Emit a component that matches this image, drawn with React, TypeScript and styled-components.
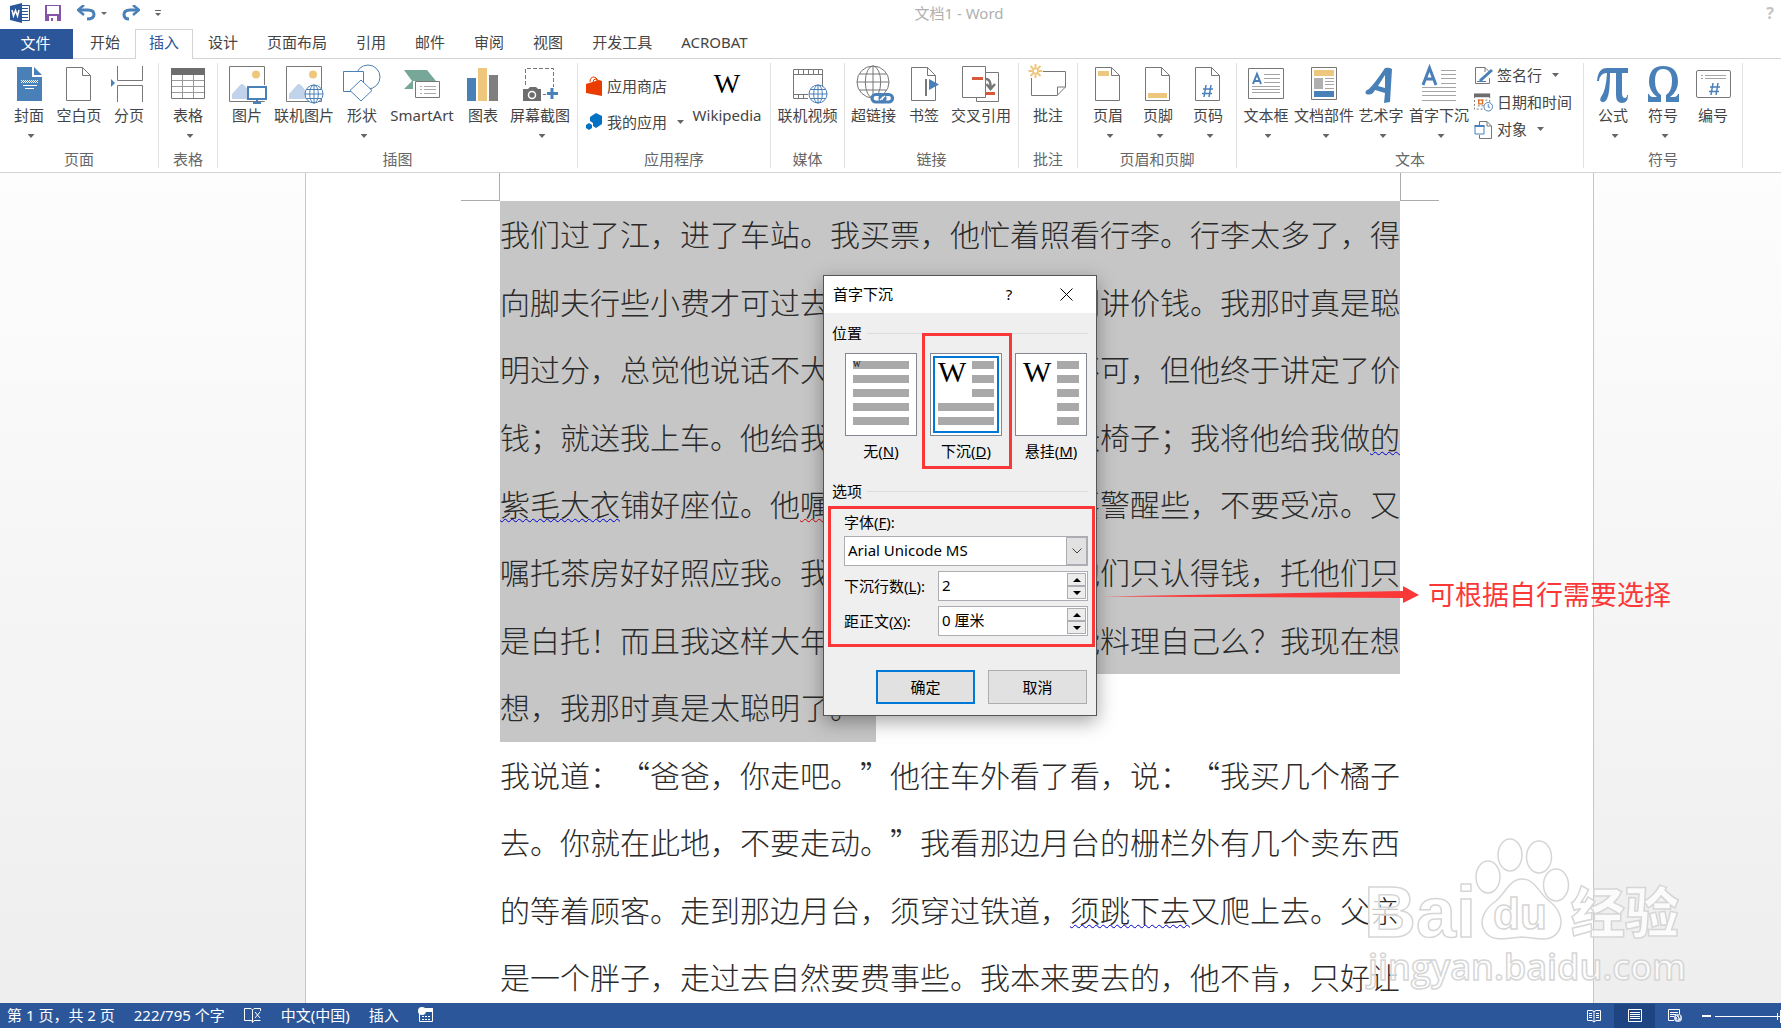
import React from "react";
import styled, { createGlobalStyle, css } from "styled-components";

const UI = '"Noto Sans", "Noto Sans CJK SC", sans-serif';
const BLUE = "#4a80b8";
const GRAY = "#777777";
const GOLD = "#eec77d";
const RED = "#fb3838";

const Global = createGlobalStyle`
  * { box-sizing: border-box; }
  body { margin: 0; background: #fff; font-family: ${UI}; font-size: 15px; line-height: 20px; color: #444; }
  button, input, select { font: inherit; color: inherit; margin: 0; padding: 0; border: 0; background: none; border-radius: 0; }
  svg { display: block; flex: none; }
`;

const Shell = styled.div`
  position: relative;
  display: flex;
  flex-direction: column;
  height: 100vh;
  overflow: hidden;
`;

/* ---------- title bar ---------- */
const TitleBar = styled.header`
  display: flex;
  height: 29px;
  flex: none;
`;
const QuickAccess = styled.div`
  display: flex;
  align-items: center;
  width: 165px;
  padding: 0 0 3px 9px;
`;
const QuickButton = styled.button<{ $w: number }>`
  display: flex;
  width: ${(p) => p.$w}px;
`;
const Title = styled.h1`
  flex: 1;
  margin: 0;
  text-align: center;
  font-size: 15px;
  font-weight: 400;
  line-height: 26px;
  color: #b0b0b0;
`;
const Help = styled.button`
  width: 28px;
  padding: 0 0 4px 6px;
  font-weight: 700;
  font-size: 16px;
  color: #c4c4c4;
`;

/* ---------- tabs ---------- */
const TabStrip = styled.nav`
  display: flex;
  gap: 1px;
  height: 30px;
  flex: none;
  box-shadow: inset 0 -1px #d4d4d4;
`;
const FileTab = styled.button`
  width: 73px;
  margin-right: 2px;
  padding: 0 10px 2px 8px;
  background: #2b579a;
  color: #fff;
`;
const Tab = styled.button<{ $active?: boolean }>`
  padding: 0 13px 5px;
  border: 1px solid transparent;
  border-bottom: 0;
  white-space: nowrap;
  ${(p) => p.$active && css`
    border-color: #d4d4d4;
    background: #fff;
    color: #2b579a;
  `}
`;

/* ---------- ribbon ---------- */
const Ribbon = styled.div`
  display: flex;
  flex: none;
  height: 114px;
  padding: 4px 0;
  border-bottom: 1px solid #d4d4d4;
`;
const Group = styled.section<{ $w: number }>`
  display: flex;
  flex-direction: column;
  flex: none;
  justify-content: space-between;
  width: ${(p) => p.$w}px;
  border-right: 1px solid #e1e1e1;
`;
const GroupBody = styled.div<{ $pad?: number }>`
  display: flex;
  height: 78px;
  padding-left: ${(p) => p.$pad ?? 0}px;
`;
const GroupName = styled.h2`
  margin: 0;
  font-size: 15px;
  font-weight: 400;
  line-height: 17px;
  text-align: center;
  color: #666;
`;
const Big = styled.button<{ $w: number }>`
  display: flex;
  flex-direction: column;
  align-items: center;
  flex: none;
  width: ${(p) => p.$w}px;
  white-space: nowrap;
`;
const BigLabel = styled.span`
  display: flex;
  justify-content: center;
  width: 0;
  line-height: 21px;
`;
const Caret = styled.i`
  width: 7px;
  height: 4px;
  background: #666;
  clip-path: polygon(0 0, 100% 0, 50% 100%);
`;
const BigCaret = styled(Caret)`
  margin: 8px 0 0 4px;
`;
const List = styled.div<{ $gap: number; $pad: string }>`
  display: flex;
  flex-direction: column;
  flex: 1;
  gap: ${(p) => p.$gap}px;
  padding: ${(p) => p.$pad};
`;
const Small = styled.button`
  display: flex;
  align-items: center;
  gap: 4px;
  height: 20px;
  white-space: nowrap;
`;
const SmallCaret = styled(Caret)`
  margin-left: 6px;
`;

/* ---------- document ---------- */
const Workspace = styled.main`
  flex: 1;
  min-height: 0;
  display: flex;
  overflow: hidden;
  padding-left: 305px;
  background: linear-gradient(#fdfdfd, #eeeeee);
`;
const Page = styled.article`
  flex: 0 0 1289px;
  background: #fff;
  border: solid #c6c6c6;
  border-width: 0 1px;
`;
const Margins = styled.div`
  display: flex;
  justify-content: space-between;
  height: 28px;
  padding: 0 154px 0 155px;
`;
const Crop = styled.i<{ $side: "left" | "right" }>`
  width: 39px;
  border-bottom: 1px solid #ababab;
  ${(p) => (p.$side === "left" ? "border-right" : "border-left")}: 1px solid #ababab;
`;
const Lines = styled.div`
  display: grid;
  grid-template-rows: repeat(12, 1fr);
  height: 811px;
  width: 900px;
  margin-left: 194px;
  font-family: "Noto Sans CJK SC", sans-serif;
  font-weight: 300;
  font-size: 30px;
  color: #2a2a2a;
  text-spacing-trim: space-all;
`;
const Line = styled.p<{ $selected?: boolean; $short?: boolean }>`
  margin: 0;
  line-height: 64px;
  white-space: nowrap;
  text-align-last: ${(p) => (p.$short ? "left" : "justify")};
  width: ${(p) => (p.$short ? "376px" : "auto")};
  background: ${(p) => (p.$selected ? "#c6c6c6" : "none")};
`;
const Wavy = styled.span<{ $c: string }>`
  text-decoration: underline wavy ${(p) => p.$c} 1px;
  text-underline-offset: 2px;
  text-decoration-skip-ink: none;
`;

/* ---------- dialog ---------- */
const Dialog = styled.form`
  position: absolute;
  left: 823px;
  top: 275px;
  width: 274px;
  border: 1px solid #555;
  background: #efefef;
  color: #000;
  box-shadow: 0 6px 18px rgba(0, 0, 0, 0.35);
`;
const DialogTitle = styled.header`
  display: flex;
  align-items: center;
  height: 37px;
  padding: 0 23px 1px 9px;
  background: #fff;
`;
const DialogName = styled.span`
  flex: 1;
`;
const DialogButton = styled.button`
  display: flex;
  justify-content: center;
  width: 14px;
  margin-left: 43px;
`;
const DialogBody = styled.div`
  padding: 10px 8px 11px;
`;
const Section = styled.h3`
  display: flex;
  align-items: center;
  gap: 5px;
  margin: 0;
  font-size: 15px;
  font-weight: 400;
  &::after { content: ""; flex: 1; height: 1px; background: #dcdcdc; }
`;
const Choices = styled.div`
  display: flex;
  gap: 13px;
  margin: 10px 1px 20px 13px;
`;
const Choice = styled.label`
  display: flex;
  flex-direction: column;
  align-items: center;
  gap: 5px;
  width: 72px;
  white-space: nowrap;
`;
const HiddenRadio = styled.input`
  position: absolute;
  opacity: 0;
`;
const Fields = styled.div`
  display: flex;
  flex-direction: column;
  gap: 5px;
  margin: 11px 0 34px 12px;
`;
const SelectWrap = styled.div`
  position: relative;
  display: flex;
  height: 30px;
  margin-top: -1px;
  border: 1px solid #abadb3;
  background: #fff;
`;
const FontSelect = styled.select`
  flex: 1;
  appearance: none;
  padding: 0 0 3px 3px;
`;
const SelectArrow = styled.span`
  position: absolute;
  right: 0;
  top: 0;
  display: flex;
  align-items: center;
  justify-content: center;
  width: 21px;
  height: 28px;
  border: 1px solid #abadb3;
  background: #e1e1e1;
  pointer-events: none;
`;
const FieldRow = styled.div`
  display: flex;
  align-items: center;
  justify-content: space-between;
`;
const Spin = styled.div`
  display: flex;
  width: 150px;
  height: 30px;
  padding: 1px;
  border: 1px solid #abadb3;
  background: #fff;
`;
const SpinInput = styled.input`
  flex: 1;
  min-width: 0;
  padding: 0 0 3px 2px;
`;
const SpinButtons = styled.div`
  display: grid;
  grid-template-rows: 1fr 1fr;
  width: 19px;
`;
const SpinButton = styled.button`
  display: flex;
  align-items: center;
  justify-content: center;
  border: 1px solid #abadb3;
  background: #ececec;
`;
const Actions = styled.div`
  display: flex;
  justify-content: flex-end;
  gap: 13px;
  padding-right: 1px;
`;
const Action = styled.button<{ $primary?: boolean }>`
  width: 99px;
  height: 34px;
  border: ${(p) => (p.$primary ? "2px solid #0078d7" : "1px solid #adadad")};
  background: #e1e1e1;
`;
const RedFrame = styled.div<{ $x: number; $y: number; $w: number; $h: number }>`
  position: absolute;
  left: ${(p) => p.$x}px;
  top: ${(p) => p.$y}px;
  width: ${(p) => p.$w}px;
  height: ${(p) => p.$h}px;
  border: 3px solid ${RED};
  pointer-events: none;
`;

/* ---------- overlays ---------- */
const Note = styled.div`
  position: absolute;
  left: 1102px;
  top: 577px;
  display: flex;
  align-items: center;
  gap: 9px;
  font-size: 27px;
  line-height: 36px;
  color: ${RED};
  white-space: nowrap;
`;
const Watermark = styled.svg`
  position: absolute;
  left: 1340px;
  top: 820px;
  pointer-events: none;
`;

/* ---------- status bar ---------- */
const Status = styled.footer`
  display: flex;
  align-items: center;
  flex: none;
  height: 25px;
  padding-left: 7px;
  background: #2b579a;
  color: #fff;
  white-space: nowrap;
`;
const StatusItems = styled.div`
  display: flex;
  align-items: center;
  gap: 19px;
  flex: 1;
  padding-bottom: 2px;
`;
const View = styled.button<{ $on?: boolean }>`
  display: flex;
  align-items: center;
  justify-content: center;
  width: 41px;
  height: 24px;
  background: ${(p) => (p.$on ? "#1e4482" : "none")};
`;
const Zoom = styled.div`
  display: flex;
  width: 85px;
`;

/* ---------- icons ---------- */
const Icon = ({ children }: { children: React.ReactNode }) => (
  <svg width="40" height="42" viewBox="0 0 40 42" fill="none" stroke={GRAY} strokeWidth="1">{children}</svg>
);
const Globe = ({ x, y, r, c = BLUE, w = 1 }: { x: number; y: number; r: number; c?: string; w?: number }) => (
  <g stroke={c} strokeWidth={w} fill="#fff">
    <circle cx={x} cy={y} r={r} />
    <ellipse cx={x} cy={y} rx={r * 0.48} ry={r} fill="none" />
    <path d={`M${x} ${y - r}V${y + r}M${x - r} ${y}H${x + r}M${x - r * 0.85} ${y - r * 0.5}H${x + r * 0.85}M${x - r * 0.85} ${y + r * 0.5}H${x + r * 0.85}`} fill="none" />
  </g>
);
const Sheet = ({ children }: { children?: React.ReactNode }) => (
  <Icon><path d="M7.500 4.500H23.500L31.500 12.500V37.500H7.500ZM23.500 4.500V12.500H31.500" />{children}</Icon>
);
const Photo = ({ children }: { children: React.ReactNode }) => (
  <Icon>
    <path d="M2.500 3.500H37.500V38.500H2.500Z" stroke={GRAY} />
    <circle cx="29" cy="11.500" r="4" fill={GOLD} stroke="none" />
    <path d="M5 36V31L13 22Q15 20 17 22L27 34V36Z" fill="#c1d3ea" stroke="none" />
    {children}
  </Icon>
);

const icons: Record<string, React.ReactNode> = {
  cover: (
    <Icon>
      <path d="M8 4H23V14H33V38H8Z" fill={BLUE} stroke="none" />
      <path d="M25 4L33 12H25Z" fill={BLUE} stroke="none" />
      <path d="M12 17.500H29M12 19.500H29" stroke="#fff" strokeDasharray="1 1" />
      <path d="M13 18.500H29" stroke="#fff" strokeDasharray="1 1" />
      <path d="M14 22.500H28M16 25.500H25" stroke="#fff" />
    </Icon>
  ),
  blank: <Sheet />,
  pageBreak: (
    <Icon>
      <path d="M8.500 3V17.500H33.500V3M8.500 39V22.500H33.500V39" />
      <path d="M2 16V24L6 20Z" fill={BLUE} stroke="none" />
    </Icon>
  ),
  table: (
    <Icon>
      <path d="M3.500 5.500H36.500V35.500H3.500Z" />
      <path d="M3 5H37V12H3Z" fill="#6d6d6d" stroke="none" />
      <path d="M4 17.500H36M4 23.500H36M4 29.500H36M14.500 12V35M25.500 12V35" stroke="#9a9a9a" />
    </Icon>
  ),
  picture: (
    <Photo>
      <path d="M20 22H40V38H20Z" fill="#fff" stroke="none" />
      <path d="M21 24H39V36H21Z" fill="#fff" stroke={BLUE} strokeWidth="2" />
      <path d="M30 36V40M26 40H34" stroke={BLUE} strokeWidth="2" />
    </Photo>
  ),
  online: <Photo><Globe x={30} y={31} r={9} /></Photo>,
  shapes: (
    <Icon>
      <g stroke={BLUE}>
        <circle cx="26" cy="14" r="12" />
        <path d="M1.500 8.500H21.500V28.500H1.500Z" fill="#fff" />
        <path d="M19 17L30 27.500L19 38L8 27.500Z" fill="#fff" />
      </g>
    </Icon>
  ),
  smart: (
    <Icon>
      <path d="M2 7H25L34 18V26H2L10 18Z" fill="#77a798" stroke="none" />
      <path d="M11 18H40V36H11Z" fill="#fff" stroke="none" />
      <path d="M13.500 18.500H37.500V34.500H13.500Z" fill="#fff" />
      <path d="M18 23.500H20M22 23.500H34M18 26.500H20M22 26.500H34M18 30.500H20M22 30.500H34" stroke="#aaa" />
    </Icon>
  ),
  chart: (
    <Icon>
      <g stroke="none">
        <path d="M4 15H13V38H4Z" fill={BLUE} />
        <path d="M15 5H24V38H15Z" fill={GOLD} />
        <path d="M26 12H35V38H26Z" fill="#7f7f7f" />
      </g>
    </Icon>
  ),
  screenshot: (
    <Icon>
      <path d="M5.500 22V5.500H33.500V24M23 31.500H26" strokeDasharray="4 2" />
      <path d="M3 26H8L10 24H16L18 26H21V38H3Z" fill="#6d6d6d" stroke="none" />
      <circle cx="12" cy="32" r="3.500" fill="#6d6d6d" stroke="#fff" strokeWidth="1.500" />
      <path d="M32 25V36M27 30.500H38" stroke={BLUE} strokeWidth="3" />
    </Icon>
  ),
  wikipedia: (
    <svg width="40" height="42" viewBox="0 0 40 42">
      <text x="20" y="30" textAnchor="middle" fontFamily="Liberation Serif, serif" fontSize="28" fill="#000">W</text>
    </svg>
  ),
  video: (
    <Icon>
      <path d="M5.500 6.500H34.500V36M5.500 6.500V35.500H20M5.500 11.500H34M5.500 31.500H20M10.500 7V11M15.500 7V11M20.500 7V11M25.500 7V11M30.500 7V11M10.500 32V35M15.500 32V35" />
      <Globe x={30} y={31} r={9} />
    </Icon>
  ),
  link: (
    <Icon>
      <Globe x={19} y={19} r={16} c={GRAY} />
      <g strokeWidth="8" stroke="#fff" strokeLinecap="round"><path d="M22 36H34" /></g>
      <g stroke={BLUE} strokeWidth="3.200">
        <rect x="18" y="31.500" width="13" height="7.500" rx="3.700" />
        <rect x="26" y="31.500" width="12.500" height="7.500" rx="3.700" />
      </g>
      <path d="M26 37L31 33" stroke="#fff" strokeWidth="1.500" />
    </Icon>
  ),
  bookmark: (
    <Sheet>
      <path d="M22 16V33" strokeWidth="2" />
      <path d="M25 16L35 21.500L25 27Z" fill={BLUE} stroke="none" />
    </Sheet>
  ),
  crossRef: (
    <Icon>
      <path d="M15.500 38.500V9.500H37.500V38.500Z" fill="#fff" />
      <path d="M1.500 3.500H24.500V34.500H1.500Z" fill="#fff" />
      <path d="M11 15.500H22M25 30.500H34" stroke="#d6593a" strokeWidth="3" />
      <path d="M25 16Q30 16 29.500 25M25.500 21L29.500 26L34 21" strokeWidth="2.500" />
    </Icon>
  ),
  comment: (
    <Icon>
      <path d="M15 8.500H37.500V24L29 32.500H3.500V15M37.500 24H29.500V32.500" />
      <path d="M7.500 1V15M0.500 8H14.500M2.500 3L12.500 13M12.500 3L2.500 13" stroke={GOLD} strokeWidth="2" />
      <circle cx="7.500" cy="8" r="2.500" fill="#fff" stroke={GOLD} strokeWidth="1.500" />
    </Icon>
  ),
  header: <Sheet><path d="M10 8H21V13H10Z" fill={GOLD} stroke="none" /></Sheet>,
  footer: <Sheet><path d="M10 30H29V35H10Z" fill={GOLD} stroke="none" /></Sheet>,
  pageNo: <Sheet><path d="M18 22L16 34M23 22L21 34M15 26H25M14 30.500H24" stroke={BLUE} strokeWidth="1.500" /></Sheet>,
  textBox: (
    <Icon>
      <path d="M2.500 5.500H37.500V35.500H2.500Z" />
      <path d="M7 21L11 11L15 21M8.500 18H13.500" stroke={BLUE} strokeWidth="2" />
      <path d="M18 11.500H34M18 15.500H34M18 19.500H34M6 23.500H34M6 26.500H34M6 29.500H34" stroke="#a5a5a5" />
    </Icon>
  ),
  parts: (
    <Icon>
      <path d="M7.500 4.500H32.500V36.500H7.500Z" strokeWidth="1" />
      <path d="M10 7H30V13H10Z" fill={GOLD} stroke="none" />
      <path d="M10 15H19V26H10Z" fill="#b0b0b0" stroke="none" />
      <path d="M10 28H30V34H10Z" fill={BLUE} stroke="none" />
      <path d="M21 15.500H30M21 18.500H30M21 21.500H30M21 25.500H30" stroke="#a5a5a5" />
    </Icon>
  ),
  wordArt: (
    <Icon>
      <path d="M24 5Q28 4 31 6L29 39L23 40L24 30L14 27Q11 33 5 31Q3 28 8 26Q14 20 24 5ZM24 12L17 23L24 25Z" fill={BLUE} fillRule="evenodd" stroke="none" />
    </Icon>
  ),
  dropCap: (
    <Icon>
      <path d="M4 22L10.500 5L17 22M6.500 16H14.500" stroke={BLUE} strokeWidth="3" />
      <path d="M22 7.500H37M22 11.500H37M22 15.500H37M22 20.500H37M3 24.500H37M3 28.500H37M3 32.500H37M3 37.500H37" stroke="#a5a5a5" />
    </Icon>
  ),
  pi: (
    <Icon>
      <path d="M4 18Q5 5 14 5H35V10H29V30Q29 35 32 35Q34 35 34 32H35Q35 40 29 40Q23 40 23 32V10H17Q17 30 14 36Q12 40 9 39Q6 38 8 34Q13 28 14 10Q7 10 6 18Z" fill={BLUE} stroke="none" />
    </Icon>
  ),
  omega: (
    <Icon>
      <path d="M5 31H6Q7 34 10 34H14Q6 28 6 19Q6 3 20 3Q35 3 35 19Q35 28 27 34H31Q34 34 35 31H36V39H23V32Q29 28 29 18Q29 6 20 6Q12 6 12 18Q12 28 18 32V39H5Z" fill={BLUE} stroke="none" />
    </Icon>
  ),
  numbering: (
    <Icon>
      <rect x="3.500" y="7.500" width="34" height="27" rx="1.500" />
      <path d="M8 12.500H10M12 12.500H33M8 15.500H10M12 15.500H33" stroke="#a5a5a5" />
      <path d="M20 20L18 32M25 20L23 32M17 24H27M16 28.500H26" stroke={BLUE} strokeWidth="1.500" />
    </Icon>
  ),
};

type Item = [icon: string, label: string, width: number, caret?: boolean];

const RibbonGroup = ({ name, w, pad, items, lead, children }: { name: string; w: number; pad?: number; items: Item[]; lead?: React.ReactNode; children?: React.ReactNode }) => (
  <Group $w={w}>
    <GroupBody $pad={pad}>
      {lead}
      {items.map(([icon, label, width, caret]) => (
        <Big key={label} $w={width} type="button">
          {icons[icon]}
          <BigLabel>{label}</BigLabel>
          {caret && <BigCaret />}
        </Big>
      ))}
      {children}
    </GroupBody>
    <GroupName>{name}</GroupName>
  </Group>
);

const Preview = ({ kind }: { kind: "none" | "drop" | "hang" }) => {
  const rows = [8, 22, 36, 50, 64];
  return (
    <svg width="72" height="83" viewBox="0 0 72 83">
      <rect x="0.500" y="0.500" width="71" height="82" fill="#fff" stroke="#83878f" />
      {kind === "drop" && <rect x="4" y="4" width="64" height="75" fill="none" stroke="#0078d7" strokeWidth="2" />}
      {rows.map((y, i) => {
        const full = kind === "none" || (kind === "drop" && i > 2);
        return <rect key={y} x={full ? 8 : 42} y={y} width={full ? 56 : 22} height="8" fill="#a9a9a9" />;
      })}
      <text
        x="8"
        y={kind === "none" ? 14 : 29}
        fontFamily="Liberation Serif, serif"
        fontSize={kind === "none" ? 8 : 30}
        fill="#000"
      >W</text>
    </svg>
  );
};

const Stepper = ({ id, value }: { id: string; value: string }) => (
  <Spin>
    <SpinInput id={id} defaultValue={value} />
    <SpinButtons>
      <SpinButton type="button" aria-label="+"><svg width="8" height="4"><path d="M0 4L4 0L8 4Z" /></svg></SpinButton>
      <SpinButton type="button" aria-label="-"><svg width="8" height="4"><path d="M0 0L4 4L8 0Z" /></svg></SpinButton>
    </SpinButtons>
  </Spin>
);

const tabs = ["开始", "插入", "设计", "页面布局", "引用", "邮件", "审阅", "视图", "开发工具", "ACROBAT"];

const selected: React.ReactNode[] = [
  "我们过了江，进了车站。我买票，他忙着照看行李。行李太多了，得",
  "向脚夫行些小费才可过去。他便又忙着和他们讲价钱。我那时真是聪",
  "明过分，总觉他说话不大漂亮，非自己插嘴不可，但他终于讲定了价",
  <>钱；就送我上车。他给我拣定了靠车门的一张椅子；我将他给我做<Wavy $c="#0000d0">的</Wavy></>,
  <><Wavy $c="#0000d0">紫毛大衣</Wavy>铺好座位。他<Wavy $c="#d00000">嘱我</Wavy>路上小心，夜里要警醒些，不要受凉。又</>,
  "嘱托茶房好好照应我。我心里暗笑他的迂；他们只认得钱，托他们只",
  "是白托！而且我这样大年纪的人，难道还不能料理自己么？我现在想",
];
const rest: React.ReactNode[] = [
  "我说道：“爸爸，你走吧。”他往车外看了看，说：“我买几个橘子",
  "去。你就在此地，不要走动。”我看那边月台的栅栏外有几个卖东西",
  <>的等着顾客。走到那边月台，须穿过铁道，<Wavy $c="#0000d0">须跳下去</Wavy>又爬上去。父亲</>,
  "是一个胖子，走过去自然要费事些。我本来要去的，他不肯，只好让",
];

export default function App() {
  return (
    <Shell lang="zh-CN">
      <Global />
      <TitleBar>
        <QuickAccess>
          <QuickButton $w={36} aria-label="Word">
            <svg width="22" height="20" viewBox="0 0 22 20">
              <path d="M11.500 2.500H20.500V17.500H11.500Z" fill="#fff" stroke="#2b579a" />
              <path d="M13 5.500H19M13 8.500H19M13 11.500H19M13 14.500H19" stroke="#2b579a" />
              <path d="M1 3L13 0V20L1 17Z" fill="#2b579a" />
              <path d="M3 7L4.500 13L6.500 7.500L8.500 13L10 7" fill="none" stroke="#fff" strokeWidth="1.500" />
            </svg>
          </QuickButton>
          <QuickButton $w={32} aria-label="保存">
            <svg width="16" height="16" viewBox="0 0 16 16">
              <path d="M0 0H16V16H0Z" fill="#8755a8" />
              <path d="M2 1H14V9H2ZM4 11H12V16H8V13H6V16H4Z" fill="#fff" />
            </svg>
          </QuickButton>
          <QuickButton $w={24} aria-label="撤消">
            <svg width="19" height="16" viewBox="0 0 19 16" fill="none">
              <path d="M3 5H11Q17 5 17 9.500Q17 14 10 14" stroke={BLUE} strokeWidth="3" />
              <path d="M7 0L1 5L7 10" stroke={BLUE} strokeWidth="2.500" />
            </svg>
          </QuickButton>
          <QuickButton $w={20} aria-label="撤消列表"><svg width="6" height="3"><path d="M0 0H6L3 3Z" fill="#666" /></svg></QuickButton>
          <QuickButton $w={34} aria-label="恢复">
            <svg width="19" height="16" viewBox="0 0 19 16" fill="none">
              <path d="M16 5H9Q3 5 3 9.500Q3 14 8 14" stroke={BLUE} strokeWidth="3" />
              <path d="M12 0L18 5L12 10" stroke={BLUE} strokeWidth="2.500" />
            </svg>
          </QuickButton>
          <QuickButton $w={8} aria-label="自定义"><svg width="6" height="7"><path d="M0 0H6V1H0ZM0 3H6L3 6Z" fill="#666" /></svg></QuickButton>
        </QuickAccess>
        <Title>文档1 - Word</Title>
        <Help type="button">?</Help>
      </TitleBar>

      <TabStrip>
        <FileTab type="button">文件</FileTab>
        {tabs.map((t) => <Tab key={t} type="button" $active={t === "插入"}>{t}</Tab>)}
      </TabStrip>

      <Ribbon>
        <RibbonGroup name="页面" w={159} pad={4} items={[["cover", "封面", 50, true], ["blank", "空白页", 50], ["pageBreak", "分页", 50]]} />
        <RibbonGroup name="表格" w={59} items={[["table", "表格", 58, true]]} />
        <RibbonGroup name="插图" w={360} pad={3} items={[
          ["picture", "图片", 52], ["online", "联机图片", 62], ["shapes", "形状", 54, true],
          ["smart", "SmartArt", 66], ["chart", "图表", 56], ["screenshot", "屏幕截图", 58, true],
        ]} />
        <RibbonGroup
          name="应用程序"
          w={193}
          pad={1}
          items={[["wikipedia", "Wikipedia", 86]]}
          lead={
            <List $gap={16} $pad="13px 0 0 7px">
              <Small type="button">
                <svg width="17" height="20" viewBox="0 0 17 20">
                  <path d="M0 8L13 4L16 5V20L0 17Z" fill="#eb3c00" />
                  <path d="M4 6Q4 1 8 1Q11 1 11 5M7 6Q7 3 10 3Q12 3 12 5" fill="none" stroke="#eb3c00" />
                </svg>
                应用商店
              </Small>
              <Small type="button">
                <svg width="17" height="18" viewBox="0 0 17 18">
                  <path d="M10 0L16 3V11L10 15L7 13V10L4 8V4Z" fill="#0072c6" />
                  <path d="M3 10L6 12V15L3 17L0 15V12Z" fill="#0072c6" />
                </svg>
                我的应用
                <SmallCaret />
              </Small>
            </List>
          }
        />
        <RibbonGroup name="媒体" w={74} items={[["video", "联机视频", 73]]} />
        <RibbonGroup name="链接" w={174} items={[["link", "超链接", 57], ["bookmark", "书签", 44], ["crossRef", "交叉引用", 70]]} />
        <RibbonGroup name="批注" w={59} items={[["comment", "批注", 58]]} />
        <RibbonGroup name="页眉和页脚" w={159} pad={5} items={[["header", "页眉", 50, true], ["footer", "页脚", 50, true], ["pageNo", "页码", 50, true]]} />
        <RibbonGroup name="文本" w={347} pad={2} items={[
          ["textBox", "文本框", 54, true], ["parts", "文档部件", 62, true], ["wordArt", "艺术字", 52, true], ["dropCap", "首字下沉", 64, true],
        ]}>
          <List $gap={7} $pad="2px 0 0 3px">
            <Small type="button">
              <svg width="19" height="19" viewBox="0 0 19 19" fill="none" stroke={GRAY}>
                <path d="M15.500 12V17.500H1.500V1.500H11L15.500 6M11 1.500V6" />
                <path d="M18 4L8 13L6 15" stroke={BLUE} strokeWidth="3" />
                <path d="M3 15.500H12" stroke={BLUE} />
              </svg>
              签名行<SmallCaret />
            </Small>
            <Small type="button">
              <svg width="19" height="20" viewBox="0 0 20 20" fill="none" stroke={GRAY}>
                <path d="M0 1H17V5H0Z" fill="#6d6d6d" stroke="none" />
                <path d="M0.500 4V17.500H12M16.500 4V10M4 8H14M4 14H10" strokeDasharray="2 2" />
                <path d="M5 8H9V12H5Z" stroke="#e07020" strokeWidth="1.500" />
                <circle cx="15" cy="15" r="4.500" fill="#fff" stroke={BLUE} />
                <path d="M15 12V15.500H17" stroke={BLUE} />
              </svg>
              日期和时间
            </Small>
            <Small type="button">
              <svg width="19" height="19" viewBox="0 0 19 19" fill="none" stroke={GRAY}>
                <path d="M5.500 5V1.500H13L17.500 6V18.500H5.500V15M13 1.500V6H17" />
                <path d="M1 6H10V14H1Z" fill="#fff" stroke={BLUE} />
                <path d="M0.500 6H10.500" stroke={BLUE} strokeWidth="2" />
              </svg>
              对象<SmallCaret />
            </Small>
          </List>
        </RibbonGroup>
        <RibbonGroup name="符号" w={159} pad={4} items={[["pi", "公式", 50, true], ["omega", "符号", 50, true], ["numbering", "编号", 50]]} />
      </Ribbon>

      <Workspace>
        <Page>
          <Margins><Crop $side="left" /><Crop $side="right" /></Margins>
          <Lines>
            {selected.map((t, i) => <Line key={i} $selected>{t}</Line>)}
            <Line $selected $short>想，我那时真是太聪明了。</Line>
            {rest.map((t, i) => <Line key={i}>{t}</Line>)}
          </Lines>
        </Page>
      </Workspace>

      <Status>
        <StatusItems>
          <span>第 1 页，共 2 页</span>
          <span>222/795 个字</span>
          <svg width="18" height="16" viewBox="0 0 18 16" fill="none" stroke="#fff">
            <path d="M8.500 14.500L7 13.500H0.500V1.500H7L8.500 3V15.500L10 13.500H16.500M8.500 3L10 1.500H16.500V4M11 5L16 11M16 5L11 11" />
          </svg>
          <span>中文(中国)</span>
          <span>插入</span>
          <svg width="16" height="16" viewBox="0 0 16 16" fill="none" stroke="#fff">
            <path d="M1.500 6V14.500H14.500V1.500H7" />
            <path d="M7 1H15V5H7Z" fill="#fff" stroke="none" />
            <circle cx="4" cy="4" r="4" fill="#fff" stroke="none" />
            <path d="M4 9.500H13M4 12.500H13" strokeDasharray="2 1" />
          </svg>
        </StatusItems>
        <View type="button" aria-label="阅读视图">
          <svg width="14" height="14" viewBox="0 0 14 14" fill="none" stroke="#fff">
            <path d="M7 13L5 11.500H0.500V1.500H5L7 2.500L9 1.500H13.500V11.500H9ZM7 2V13M2 4.500H5M2 6.500H5M2 8.500H5M9 4.500H12M9 6.500H12M9 8.500H12" />
          </svg>
        </View>
        <View type="button" $on aria-label="页面视图">
          <svg width="14" height="14" viewBox="0 0 14 14" fill="none" stroke="#fff">
            <path d="M0.500 0.500H13.500V12.500H0.500ZM2 3.500H12M2 5.500H12M2 7.500H12M2 9.500H12" />
          </svg>
        </View>
        <View type="button" aria-label="Web 版式">
          <svg width="15" height="14" viewBox="0 0 15 14" fill="none" stroke="#fff">
            <path d="M6 11.500H0.500V0.500H11.500V5M2 3.500H10M2 5.500H8M2 7.500H6" />
            <circle cx="10" cy="9" r="4" fill="#d5dfee" stroke="none" />
            <path d="M8 7L10 9L9 11M11 6L12 9" stroke="#2b579a" />
          </svg>
        </View>
        <Zoom>
          <svg width="85" height="14" viewBox="0 0 85 14">
            <path d="M6 6H15V8H6ZM19 7H85V8H19ZM81 4H82V11H81ZM84 1H85V14H84Z" fill="#fff" />
          </svg>
        </Zoom>
      </Status>

      <Dialog onSubmit={(e) => e.preventDefault()}>
        <DialogTitle>
          <DialogName>首字下沉</DialogName>
          <DialogButton type="button">?</DialogButton>
          <DialogButton type="button" aria-label="关闭">
            <svg width="13" height="13" viewBox="0 0 13 13"><path d="M0.500 0.500L12.500 12.500M12.500 0.500L0.500 12.500" stroke="#000" /></svg>
          </DialogButton>
        </DialogTitle>
        <DialogBody>
          <Section>位置</Section>
          <Choices>
            <Choice><HiddenRadio type="radio" name="pos" /><Preview kind="none" /><span>无(<u>N</u>)</span></Choice>
            <Choice><HiddenRadio type="radio" name="pos" defaultChecked /><Preview kind="drop" /><span>下沉(<u>D</u>)</span></Choice>
            <Choice><HiddenRadio type="radio" name="pos" /><Preview kind="hang" /><span>悬挂(<u>M</u>)</span></Choice>
          </Choices>
          <Section>选项</Section>
          <Fields>
            <label htmlFor="font">字体(<u>F</u>):</label>
            <SelectWrap>
              <FontSelect id="font"><option>Arial Unicode MS</option></FontSelect>
              <SelectArrow><svg width="10" height="6" viewBox="0 0 10 6"><path d="M0.500 0.500L5 5L9.500 0.500" fill="none" stroke="#444" /></svg></SelectArrow>
            </SelectWrap>
            <FieldRow><label htmlFor="rows">下沉行数(<u>L</u>):</label><Stepper id="rows" value="2" /></FieldRow>
            <FieldRow><label htmlFor="dist">距正文(<u>X</u>):</label><Stepper id="dist" value="0 厘米" /></FieldRow>
          </Fields>
          <Actions>
            <Action type="submit" $primary>确定</Action>
            <Action type="button">取消</Action>
          </Actions>
        </DialogBody>
        <RedFrame $x={98} $y={57} $w={90} $h={136} />
        <RedFrame $x={4} $y={230} $w={267} $h={141} />
      </Dialog>

      <Note>
        <svg width="317" height="18" viewBox="0 0 317 18"><path d="M0 10.500L301 5V0L317 9L301 17V12Z" fill={RED} /></svg>
        可根据自行需要选择
      </Note>

      <Watermark width="360" height="180" viewBox="0 0 360 180" fill="#fff" fillOpacity="0.750" stroke="#d6d6d6" strokeWidth="1.500">
        <ellipse cx="148" cy="57" rx="12" ry="16" />
        <ellipse cx="170" cy="35" rx="12" ry="16" />
        <ellipse cx="199" cy="37" rx="12.500" ry="16" />
        <ellipse cx="216" cy="65" rx="12.500" ry="16" />
        <path d="M182 59C170 59 166 72 156 81C144 89 139 101 144 110C150 122 164 119 181 117C198 118 210 123 218 112C225 102 219 88 209 81C198 72 195 59 182 59Z" />
        <text x="24" y="117" fontFamily="Liberation Sans, Arial, sans-serif" fontWeight="700" fontSize="72">Bai</text>
        <text x="153" y="109" fontFamily="Liberation Sans, Arial, sans-serif" fontWeight="700" fontSize="44">du</text>
        <text x="231" y="113" fontFamily="Noto Sans CJK SC, sans-serif" fontWeight="900" fontSize="54">经验</text>
        <text x="28" y="160" fontFamily="Open Sans, sans-serif" fontWeight="600" fontSize="36">jingyan.baidu.com</text>
      </Watermark>
    </Shell>
  );
}
